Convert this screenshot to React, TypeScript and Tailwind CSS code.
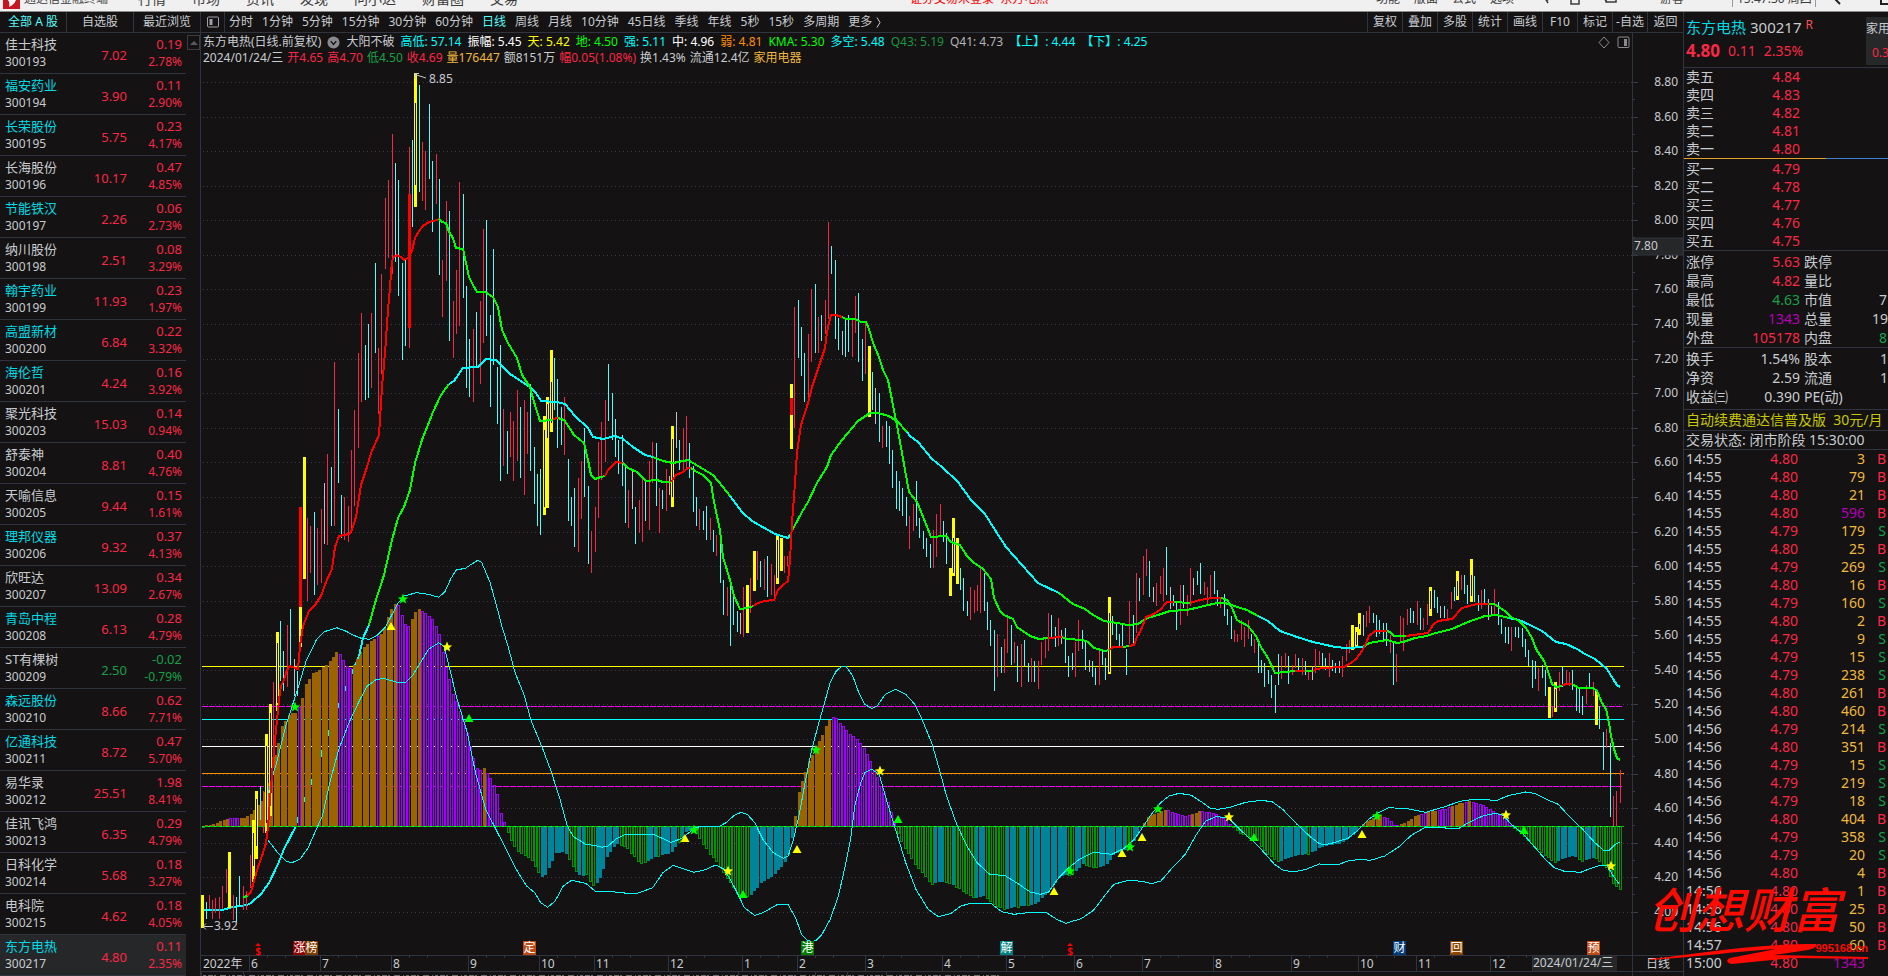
import React from "react";

const SANS = "font-['Noto_Sans','Noto_Sans_CJK_SC',sans-serif]";

/* ---------- watch list ---------- */

type Stock = [name: string, code: string, price: string, change: string, pct: string, hot: boolean];

const STOCKS: Stock[] = [
  ["佳士科技", "300193", "7.02", "0.19", "2.78%", false],
  ["福安药业", "300194", "3.90", "0.11", "2.90%", true],
  ["长荣股份", "300195", "5.75", "0.23", "4.17%", true],
  ["长海股份", "300196", "10.17", "0.47", "4.85%", false],
  ["节能铁汉", "300197", "2.26", "0.06", "2.73%", true],
  ["纳川股份", "300198", "2.51", "0.08", "3.29%", false],
  ["翰宇药业", "300199", "11.93", "0.23", "1.97%", true],
  ["高盟新材", "300200", "6.84", "0.22", "3.32%", true],
  ["海伦哲", "300201", "4.24", "0.16", "3.92%", true],
  ["聚光科技", "300203", "15.03", "0.14", "0.94%", false],
  ["舒泰神", "300204", "8.81", "0.40", "4.76%", false],
  ["天喻信息", "300205", "9.44", "0.15", "1.61%", false],
  ["理邦仪器", "300206", "9.32", "0.37", "4.13%", true],
  ["欣旺达", "300207", "13.09", "0.34", "2.67%", false],
  ["青岛中程", "300208", "6.13", "0.28", "4.79%", true],
  ["ST有棵树", "300209", "2.50", "-0.02", "-0.79%", false],
  ["森远股份", "300210", "8.66", "0.62", "7.71%", true],
  ["亿通科技", "300211", "8.72", "0.47", "5.70%", true],
  ["易华录", "300212", "25.51", "1.98", "8.41%", false],
  ["佳讯飞鸿", "300213", "6.35", "0.29", "4.79%", false],
  ["日科化学", "300214", "5.68", "0.18", "3.27%", false],
  ["电科院", "300215", "4.62", "0.18", "4.05%", false],
  ["东方电热", "300217", "4.80", "0.11", "2.35%", true],
];

/* ---------- trades and order book ---------- */

const TRADES: [string, string, number][] = [
  ["14:55", "4.80", 3], ["14:55", "4.80", 79], ["14:55", "4.80", 21], ["14:55", "4.80", 596],
  ["14:55", "4.79", 179], ["14:55", "4.80", 25], ["14:55", "4.79", 269], ["14:55", "4.80", 16],
  ["14:55", "4.79", 160], ["14:55", "4.80", 2], ["14:55", "4.79", 9], ["14:55", "4.79", 15],
  ["14:56", "4.79", 238], ["14:56", "4.80", 261], ["14:56", "4.80", 460], ["14:56", "4.79", 214],
  ["14:56", "4.80", 351], ["14:56", "4.79", 15], ["14:56", "4.79", 219], ["14:56", "4.79", 18],
  ["14:56", "4.80", 404], ["14:56", "4.79", 358], ["14:56", "4.79", 20], ["14:56", "4.80", 4],
  ["14:56", "4.80", 1], ["14:56", "4.80", 25], ["14:56", "4.80", 50], ["14:57", "4.80", 60],
  ["15:00", "4.80", 1343],
];

const SELLS: [string, string][] = [["卖五", "4.84"], ["卖四", "4.83"], ["卖三", "4.82"], ["卖二", "4.81"], ["卖一", "4.80"]];
const BUYS: [string, string][] = [["买一", "4.79"], ["买二", "4.78"], ["买三", "4.77"], ["买四", "4.76"], ["买五", "4.75"]];

type Stat = [string, string, string, string, string, string];
const STATS_A: Stat[] = [
  ["涨停", "5.63", "text-[#f92845]", "跌停", "", ""],
  ["最高", "4.82", "text-[#f92845]", "量比", "", ""],
  ["最低", "4.63", "text-[#17a047]", "市值", "7", "pl-[7px]"],
  ["现量", "1343", "text-[#b400b4]", "总量", "19", "pl-0"],
  ["外盘", "105178", "text-[#f92845]", "内盘", "8", "pl-[7px] text-[#17a047]"],
];
const STATS_B: Stat[] = [
  ["换手", "1.54%", "", "股本", "14", "pl-2"],
  ["净资", "2.59", "", "流通", "1.", "pl-2"],
  ["收益㈢", "0.390", "", "PE(动)", "", ""],
];

/* ---------- chart series ---------- */

/* Each block holds an origin, the units per pixel on x, and its bars:
   r/c/g thin bars, y/R thick bars, h the hollow part of a thick bar. */
type Block = { ox: number; oy: number; sx: number; bars: string };

const BLOCKS: Block[] = [
  {
    ox: 0, oy: 646, sx: 2.45,
    bars:
      "y497,747,845 c505,768,820 r513,747,790 r521,762,818 r529,756,800 r537,753,819 r545,720,790 r554,669,740 y562,618,787 r571,747,822 c579,753,827 c587,690,780 r597,720,792 r604,735,792 r614,627,725 y621,522,708 h621,560,660 y628,435,640 h628,460,600 c638,420,522 r645,435,560 y653,264,560 h653,300,530 y662,174,510 h662,200,470 r670,108,300 y679,-42,195 h679,-10,170 c687,-75,105 c694,15,135 r704,-63,123 c712,-111,62 g721,38,150 c728,75,150",
  },
  {
    ox: 0, oy: 320, sx: 2.45,
    bars:
      "R737,561,862 y737,862,980 y746,411,777 r753,594,843 r760,618,759 c770,576,825 r778,624,795 r787,567,789 g795,489,672 r802,402,675 c812,441,618 r820,126,618 c829,267,489 c837,525,654 r844,531,660 r854,558,666 r861,390,640 r868,270,558 r879,98,384 r886,-21,245 c895,75,240 c903,12,234 r910,-21,204 c920,-171,99 r927,84,282 r935,-138,162 c1150,57,231 r1160,27,245 c1167,-24,143 r1177,-57,192 r1184,-273,68 c1192,-300,48 c1201,-15,261 c1209,-213,135 c1219,140,312 c1226,75,483",
  },
  {
    ox: 200, oy: 60, sx: 3,
    bars:
      "r556,414,626 r565,360,594 r577,222,642 c586,309,606 c595,360,708 c607,609,900 c616,594,858 r628,261,863 R628,403,805 c637,240,500 y646,40,440 h646,129,375 c658,75,396 r667,246,423 r676,273,450 c688,132,357 c697,303,516 r709,282,432 c718,357,645 r727,600,770 r739,423,662 c748,453,843 r760,723,895 r769,630,822 r778,366,798 c790,402,714 c799,678,984",
  },
  {
    ox: 440, oy: 360, sx: 3,
    bars:
      "r190,147,318 c202,213,342 r211,156,291 r220,183,363 r232,90,303 c241,141,354 r253,120,405 r262,156,282 c271,72,333 c283,261,432 c292,342,498 c301,327,525 y313,168,465 h313,210,440 y322,111,444 h322,132,234 y334,-30,216 h334,66,190 c343,-6,150 c352,57,264 c364,141,255 r373,111,285 c385,297,483 c394,411,498 c403,384,561 r415,354,576 r424,303,477 c433,204,411 c445,378,612 r454,513,639 r466,441,576 r475,246,474 r484,186,360 r496,120,306 c505,12,183 c517,99,240 c526,177,291 c535,240,342 c547,225,378 c556,321,489 r565,390,504 g577,330,447 c586,441,552 r598,420,519 r607,348,546 c616,363,483 r628,303,510 r637,246,369 c649,249,438 r658,384,519 c667,390,447 r679,327,453 g688,348,405 y697,198,441 h697,237,410 g709,156,264 c718,240,330 r730,204,330 r739,168,324 c748,249,354 c760,318,456 c769,411,498 r778,447,510 c790,453,510 c799,438,540 r811,474,540 c820,510,576 r829,525,588 c841,546,669 c850,660,765 r862,681,768 c871,666,858 c880,705,795 c892,753,816 g901,759,822 r910,681,831 y922,675,819 r931,654,759 y943,573,693 r952,573,660 c961,603,681 r973,597,690 c982,588,711 r994,612,705 r1003,645,720 y1012,525,672 h1012,540,655 y1024,534,633 r1033,588,639 r1042,588,618 y1054,72,267 R1054,114,165 r1063,-159,204 c1075,-180,-6 c1084,-99,48 c1093,-21,126 r1106,-78,114",
  },
  {
    ox: 620, oy: 320, sx: 2.45,
    bars:
      "r469,-93,126 c479,-108,99 r486,-9,99 c493,-15,63 r503,-60,42 r511,-294,-3 c518,-222,-138 c528,-180,57 c535,-6,90 g545,33,105 c552,0,111 c560,-15,96 r569,0,111 r577,-72,39 c584,-81,126 c593,57,183 r602,10,162 y611,78,291 c618,156,270 g626,204,312 c635,219,366 r643,318,384 c652,303,381 c660,318,432 c667,390,504 c677,453,567 c685,483,573 c692,504,588 c701,531,618 r709,588,687 r718,552,633 c726,483,618 c734,594,654 c743,633,687 c751,654,711 c760,672,744 r768,630,744 r776,582,711 r785,552,652 c792,603,666 c800,639,732",
  },
  {
    ox: 930, oy: 530, sx: 3,
    bars:
      "y61,114,198 y70,-36,138 h70,25,130 y82,24,162 c91,114,180 c100,144,243 c112,213,258 r121,171,270 r133,180,249 r142,165,243 r151,108,249 c163,129,243 c172,216,300 c181,270,348 c193,300,483 r202,312,441 c214,351,429 r223,327,429 r232,264,369 c244,285,405 r253,336,399 c262,348,456 r274,342,471 c283,330,408 c295,399,456 r304,384,456 c313,393,456 r325,393,477 r334,336,405 r346,327,384 r355,249,363 c364,255,321 c376,291,351 r385,264,348 g394,300,342 c406,294,399 c415,378,441 c427,369,420 r436,336,441 r445,270,363 c457,300,357 c466,330,420 g478,390,426 c487,393,441 c496,414,465 r508,363,465 c517,357,405 c526,384,450 y538,201,432 h538,250,425 c547,258,315 c559,282,330 c568,312,348 c577,285,348 c589,357,435 r598,213,342 c610,255,342 r619,129,310 c628,144,213 r640,78,195 r649,57,138 c658,93,201 g670,171,216 r679,159,228 r691,138,192 r700,114,213 c709,51,195 g721,171,237 c730,195,228 c739,216,300 r751,165,285 c760,165,234 r772,195,258 r781,114,228 g790,144,195 c802,123,165 c811,99,192 r823,156,195 r832,171,222 r841,135,201 c853,123,192 c862,180,228 r871,200,234 c883,192,258 c892,237,285 c904,258,327 r913,300,336 r922,312,336 r934,270,330 r943,291,351 r955,270,327 c964,312,348 r973,327,369 c985,327,429 c994,390,429 c1003,399,471 c1015,420,462 c1024,435,504 c1036,465,548 c1045,372,465 r1054,378,447 r1066,369,414 c1075,378,462 r1087,405,435 r1096,372,414 c1105,384,423 r1117,384,435 c1126,393,435 r1135,423,450 g1147,408,450 r1156,357,429 r1168,363,405 c1177,369,408 c1186,384,420 r1198,369,441 c1207,390,423 c1216,399,429 g1228,393,429 r1237,378,441 r1249,342,393 r1258,330,369 y1267,285,360 y1279,291,351 h1279,305,345 y1288,249,315 h1288,282,296 g1300,255,318 r1309,243,291 r1318,228,279 c1330,249,279 c1339,255,321 c1348,270,312 c1360,279,330 c1369,279,348 r1381,315,369 c1390,339,465 r1399,372,456 r1411,258,336 r1420,264,363 r1432,237,285 c1441,234,279 c1450,243,279 r1462,213,285 c1471,234,300 r1480,264,300 r1492,222,285 y1501,171,258 h1501,183,238 c1513,180,234 c1522,201,249 g1531,228,264 c1543,228,264 r1552,237,267",
  },
  {
    ox: 1248, oy: 320, sx: 2.45,
    bars:
      "r498,816,867 c506,801,843 y513,753,840 h513,783,828 r523,765,810 c530,765,822 c538,795,852 y547,717,846 h547,765,828 c555,768,846 c564,825,873 r572,810,867 c580,807,850 g588,837,900 g597,858,885 r604,807,888 c613,846,915 c621,897,942 c630,921,970 c638,921,972 r646,921,993 c655,921,951 c662,921,955 c672,924,982 c680,957,1011 c688,990,1038",
  },
  {
    ox: 1248, oy: 646, sx: 2.45,
    bars:
      "c697,42,126 c704,45,100 r712,65,135 c721,57,96 c729,72,150 y738,123,216 r746,180,213 y754,108,198 h754,130,186 r762,78,135 c770,60,123 r780,72,115 r787,78,120 c795,72,132 c804,120,195 c812,123,201 c819,150,207 r829,117,174 c837,81,130 r846,108,150 y853,132,237 c861,180,249 c870,258,372 r878,249,306 c888,291,513 r895,450,541 r903,435,541 r912,372,471",
  },
];

const KINDS: [string, string, number][] = [
  ["r", "#ee2a48", 1],
  ["c", "#54fcfc", 1],
  ["g", "#c0c0c8", 1],
  ["y", "#ffff00", 3],
  ["R", "#ff0000", 3],
  ["h", "#141213", 1],
];

function barPath(kind: string): string {
  let d = "";
  for (const b of BLOCKS) {
    for (const item of b.bars.split(" ")) {
      if (item[0] !== kind) continue;
      const [x, t, e] = item.slice(1).split(",").map(Number);
      d += `M${Math.floor(b.ox + x / b.sx) + 0.5} ${Math.round(b.oy + t / 3)}V${Math.round(b.oy + e / 3)}`;
    }
  }
  return d;
}

const C = "#00ffff";
const G = "#00ff00";
const R = "#ff0000";

const FAST: [string, string][] = [
  [G, "243,897 248,896"],
  [R, "247,896 251,892 254,881 258,867 263,853 266,843 268,827 270,800 273,762 276,730 279,700 281,686 284,680 287,670 290,666 295,668 298,669 300,646 303,626 309,611 315,605 321,596 326,582 332,569 335,547 339,536 349,534 352,530 356,517 361,485 367,467 371,453 379,435 382,387 385,353 388,310 390,287 392,261 394,257 397,255 401,257 404,260 408,258 412,251 415,238 419,231 423,226 429,222 437,220 439,219"],
  [G, "439,219 442,222 446,223 449,232 453,238 456,248 463,249 466,263 469,277 473,285 477,292 485,292 493,297 498,307 502,330 508,343 517,358 522,375 530,387 534,402 540,421 553,420"],
  [R, "553,419 558,418"],
  [G, "558,418 564,420 569,427 574,435 584,443 588,460 591,475 595,479 601,477 605,476"],
  [R, "605,476 608,470 616,462 623,463"],
  [G, "623,463 628,468 637,472 642,477 646,481 657,480 663,482 671,482"],
  [R, "671,482 676,475 683,472 688,468 691,468"],
  [G, "691,468 695,471 703,475 711,483 714,502 720,530 723,557 730,580 734,596 740,609 748,608 753,606"],
  [R, "753,606 758,603 765,601 774,600 778,590 783,585 788,581 790,560 792,523 795,483 797,452 801,425 808,403 812,387 821,360 825,348 827,332 829,323 831,315 836,315 842,317"],
  [G, "842,317 846,319 855,319 861,322 866,322 869,329 873,343 879,357 883,370 888,380 892,400 896,420 902,453 909,492 917,502 924,519 931,537 946,536 951,542 960,545 967,556 973,562 983,569 991,579 994,598 1000,611 1004,615 1013,619 1017,627 1030,636 1039,639 1048,638"],
  [R, "1048,638 1062,637"],
  [G, "1062,637 1067,639 1083,640 1088,642 1094,648 1105,651 1109,650"],
  [R, "1109,650 1113,647 1123,647"],
  [G, "1123,647 1129,646"],
  [R, "1129,646 1134,645 1137,637 1141,630 1146,617 1152,615 1160,610 1167,602 1174,602"],
  [G, "1174,602 1190,603"],
  [R, "1190,603 1200,600 1212,598 1221,598"],
  [G, "1221,598 1225,599 1228,601 1232,608 1237,620 1248,626 1256,636 1261,647 1268,658 1275,673 1285,672 1295,671"],
  [R, "1295,671 1305,671"],
  [G, "1305,671 1313,671"],
  [R, "1313,671 1317,669 1323,668 1344,667 1351,663 1356,659 1362,651 1366,643 1369,636 1375,631 1387,631"],
  [G, "1387,631 1390,632 1394,636 1406,636"],
  [R, "1406,636 1413,635 1428,633 1433,625 1438,621 1452,619 1462,608 1477,604 1489,604"],
  [G, "1489,604 1494,604 1499,607 1506,612 1511,617 1519,621 1526,628 1532,638 1536,649 1540,655 1544,661 1548,671 1552,684 1556,687 1562,686"],
  [R, "1562,685 1567,684 1572,684"],
  [G, "1572,684 1579,688 1593,688 1597,691 1602,703 1606,709 1609,723 1611,736 1614,749 1617,758 1620,760"],
];

const SLOW_START = "202,910 222,910 233,907 247,905 251,903 261,894 269,883 278,864 284,849 295,828 302,806 313,778 337,709 359,656 363,638 369,625";

const SLOW: [string, string][] = [
  [C, "359,656 363,638 369,625"],
  [G, "369,625 375,603 384,575 392,540 398,518 404,507 410,490 415,463 422,440 433,412 441,395 449,384"],
  [C, "449,384 454,381 463,368 478,367 486,359 496,360 510,374 530,387 536,393 541,401 557,402 565,404 575,416 588,428 593,437 603,439 615,436 623,439 633,447 645,455 653,457"],
  [G, "653,457 663,461 673,463 688,460 698,466 713,475 723,487 730,496"],
  [C, "730,496 742,512 752,521 775,534 788,538 790,535"],
  [G, "790,535 794,527 802,512 808,502 817,483 827,467 831,455 842,440 858,421 870,413 878,413 889,416 898,422 907,432"],
  [C, "907,432 910,436 918,442 932,459 942,467 958,482 971,500 985,514 995,530 1006,547 1022,565 1038,583 1059,593"],
  [G, "1059,593 1073,604 1085,609 1093,615 1104,621 1117,623 1128,625 1138,624 1147,618 1158,615 1170,611 1187,610 1200,607 1217,603 1225,603 1247,610 1258,616"],
  [C, "1258,616 1268,621 1280,631 1297,637 1313,642 1335,647 1347,648 1363,647"],
  [G, "1363,647 1369,643 1387,640 1397,643 1403,642 1415,638 1427,636 1432,634 1448,630 1452,629 1468,622 1485,616 1497,615 1509,618"],
  [C, "1509,618 1519,620 1530,625 1542,631 1556,642 1566,644 1577,649 1585,654 1595,659 1607,669 1613,679 1617,685 1620,687"],
];

/* Band samples: origin x, origin y, then points in 2.45 × 3 units. */
type Span = [number, number, string];

const UPPER: Span[] = [
  [0, 646, "657,440 670,380 678,350 700,240 728,135 750,45 762,15"],
  [0, 320, "775,960 795,935 825,923 845,932 865,945 885,955 905,958 925,945 945,920 960,885 975,850 990,828 1020,818 1050,823 1075,832 1090,815 1105,775 1118,750 1140,745 1155,733 1170,721 1180,727 1200,785 1215,850 1230,920 1245,980"],
  [0, 646, "1250,25 1262,80 1285,150 1300,220 1330,310 1350,375 1372,460 1390,540 1405,572 1435,595 1460,599 1475,604 1490,600 1510,578 1530,566"],
  [620, 646, "20,566 85,566 100,575 125,589 150,578 185,545 200,541 240,543 260,530 280,508 297,499 312,505 330,530 350,580 375,620 400,637 412,630 425,580 440,500 455,400 470,310 485,240 500,175 515,110 530,75 542,62 555,63 570,90 585,140 600,175 617,188 630,180 650,145 675,130 700,145 722,175 740,220 765,295 780,360 800,450 825,535 850,600 875,650 905,684 945,690 975,713 1005,738 1030,745 1050,738 1075,695 1100,665 1125,640 1160,619 1205,625 1235,607 1260,580 1280,545 1300,508 1325,470 1345,450 1370,442 1400,448 1430,472 1445,486 1465,490 1495,484 1530,470"],
  [1248, 646, "0,468 35,463 60,468 85,490 120,535 155,575 175,593 190,596 210,590 245,577 270,552 295,520 320,500 345,485 390,488 435,499 480,483 520,466 555,460 610,463 640,448 680,438 705,443 735,462 760,475 790,515 820,550 850,590 870,612 885,613 900,595 912,588"],
];

const LOWER: Span[] = [
  [0, 646, "657,583 680,620 700,645 715,650 735,640 755,605 775,550 790,510 810,400 830,310 855,230 880,165 900,120 920,102 940,97 970,108 995,108 1010,90 1030,50 1050,10 1075,-10 1088,2 1100,60 1120,160 1145,260 1165,380 1190,490 1215,550 1240,610 1265,670 1290,720 1310,740 1325,770 1342,784 1360,765 1380,720 1400,703 1435,712 1460,737 1500,737 1530,741"],
  [620, 646, "45,741 80,725 105,680 130,658 155,668 180,679 205,673 235,657 255,670 270,700 285,735 305,785 330,808 350,800 385,776 412,776 430,815 445,865 458,882 470,887 482,882 495,865 515,820 535,750 550,670 565,580 575,480 590,410 600,380 617,370 635,385 655,470 675,550 700,650 725,730 755,790 780,812 810,803 835,780 860,772 910,773 935,797 965,805 1000,800 1045,800 1070,820 1092,832 1130,818 1160,793 1190,745 1210,715 1245,703 1280,706 1302,713 1325,705 1350,670 1385,625 1410,570 1435,525 1460,512 1490,515 1510,540 1536,570"],
  [1248, 646, "15,588 40,620 65,655 85,672 110,678 140,671 175,654 220,656 245,645 275,640 300,643 335,630 370,602 400,568 435,543 470,545 515,548 540,530 575,510 605,502 625,508 645,535 675,565 700,600 725,635 750,665 775,676 815,679 840,667 865,657 880,660 895,690 910,715"],
];

function bandPoints(spans: Span[]): string {
  return spans
    .flatMap(([ox, oy, pts]) =>
      pts.split(" ").map((p) => {
        const [x, y] = p.split(",").map(Number);
        return `${(ox + x / 2.45).toFixed(1)},${(oy + y / 3).toFixed(1)}`;
      }),
    )
    .join(" ");
}

/* Histogram: height profile and the ranges that take the second colour. */
const ZERO = 826;
const PROFILE =
  "203,826 214,824 220,821 230,818 243,818 250,815 260,803 267,787 277,747 282,726 290,713 297,713 302,698 306,684 312,674 320,669 329,663 338,649 342,658 347,666 351,668 355,664 361,650 366,645 375,638 382,633 388,617 393,603 398,605 402,615 406,627 410,624 415,612 419,609 423,612 431,617 437,628 441,640 445,663 453,694 461,713 467,733 473,758 478,771 484,768 490,778 496,789 500,809 503,820 506,826 512,843 520,853 531,858 541,878 547,873 555,853 565,852 571,863 580,877 586,874 594,887 599,881 608,854 618,843 626,847 640,863 646,862 659,855 671,853 685,833 693,828 702,843 718,864 728,879 738,894 749,897 761,883 775,874 787,859 792,838 793,826 795,816 798,796 802,781 808,763 816,746 822,735 827,724 831,716 836,718 849,733 857,739 865,749 872,766 881,786 887,799 893,819 895,826 902,843 914,863 932,884 944,881 955,886 975,898 985,896 993,904 1004,909 1016,907 1036,904 1046,894 1061,876 1073,874 1083,864 1098,868 1106,865 1114,854 1130,848 1142,826 1149,816 1167,809 1177,814 1187,816 1200,811 1212,812 1224,818 1232,826 1240,833 1256,839 1266,853 1279,862 1293,856 1311,853 1321,847 1342,843 1354,834 1361,826 1366,822 1379,815 1389,819 1395,826 1405,823 1415,816 1432,811 1444,809 1460,803 1471,801 1483,805 1493,811 1503,816 1511,826 1521,833 1534,846 1554,862 1572,856 1583,861 1595,857 1607,868 1613,883 1620,889"
    .split(" ")
    .map((p) => p.split(",").map(Number));

const FALLING: [number, number][] = [
  [230, 239], [296, 300], [340, 353], [377, 380], [396, 408], [421, 482], [485, 506], [833, 896], [1168, 1189], [1202, 1209],
  [1213, 1233], [1381, 1397], [1421, 1426], [1437, 1449], [1463, 1467], [1473, 1512],
];
const RISING: [number, number][] = [
  [542, 567], [579, 585], [597, 618], [648, 656], [659, 676], [681, 692], [749, 794], [934, 944], [951, 953], [975, 986], [1006, 1014],
  [1019, 1027], [1030, 1066], [1076, 1085], [1098, 1125], [1131, 1143], [1279, 1306], [1310, 1361], [1558, 1576], [1585, 1594],
];

const within = (x: number, list: [number, number][]) => list.some(([a, b]) => x >= a && x <= b);

function levelAt(x: number): number {
  for (let i = 1; i < PROFILE.length; i++) {
    const [x1, y1] = PROFILE[i];
    const [x0, y0] = PROFILE[i - 1];
    if (x <= x1) return y0 + ((y1 - y0) * (x - x0)) / (x1 - x0);
  }
  return PROFILE[PROFILE.length - 1][1];
}

const HISTOGRAM = Array.from({ length: 415 }, (_, i) => {
  const x = Math.round(203 + i * 3.4225);
  const y = Math.round(levelAt(x));
  return { x, y, up: y < ZERO };
});

const RAILS: [number, string, boolean][] = [
  [666, "#ffff00", false],
  [706, "#ff00ff", true],
  [719, "#00ffff", false],
  [746, "#ffffff", false],
  [773, "#ff9000", false],
  [786, "#ff00ff", true],
];

const STARS: [number, number, string][] = [
  [295, 707, G], [403, 599, G], [447, 647, "#ffff00"], [694, 830, G], [728, 871, "#ffff00"], [816, 750, G], [880, 771, "#ffff00"],
  [1070, 871, G], [1130, 847, G], [1158, 809, G], [1229, 817, "#ffff00"], [1377, 816, G], [1506, 815, "#ffff00"], [1611, 866, "#ffff00"],
];
const TRIANGLES: [number, number, string][] = [
  [391, 626, "#ffff00"], [469, 718, G], [685, 838, "#ffff00"], [743, 894, G], [797, 849, "#ffff00"], [898, 819, G], [1054, 891, "#ffff00"],
  [1122, 853, "#ffff00"], [1142, 837, "#ffff00"], [1254, 837, G], [1362, 834, "#ffff00"], [1524, 830, G],
];
const BADGES: [number, string, string][] = [
  [293, "涨", "#8b0000"], [305, "榜", "#7d3c00"], [523, "定", "#c04a14"], [801, "港", "#007d00"],
  [1000, "解", "#007f80"], [1393, "财", "#003c78"], [1450, "回", "#8a4600"], [1587, "预", "#c04a14"],
];
const MONTHS: [number, string][] = [
  [249, "6"], [320, "7"], [391, "8"], [468, "9"], [539, "10"], [594, "11"], [668, "12"], [742, "1"], [797, "2"], [865, "3"], [942, "4"],
  [1006, "5"], [1074, "6"], [1142, "7"], [1213, "8"], [1291, "9"], [1358, "10"], [1416, "11"], [1490, "12"], [1532, ""],
];

function Chart() {
  const levels = Array.from({ length: 25 }, (_, i) => ({ y: Math.round(82 + i * 34.58), label: (8.8 - i * 0.2).toFixed(2) }));
  return (
    <svg
      viewBox="201 33 1482 943"
      className={`block h-full w-full ${SANS} text-xs`}
      preserveAspectRatio="xMinYMin meet"
      role="img"
      aria-label="日线"
    >
      <g shapeRendering="crispEdges" fill="none">
        {levels.map(({ y }) => (
          <g key={y} stroke="#3a3d48">
            <path d={`M203 ${y}.5H1632`} strokeDasharray="1 3" />
            <path d={`M1633 ${y}.5h5`} />
            {y < 900 && <path d={`M1633 ${y + 17}.5h2`} />}
          </g>
        ))}
        <path d="M1632.5 33V976M201 955.5H1683M201 971.5H1683" stroke="#30343f" />
        {RAILS.map(([y, color, dashed]) => (
          <path key={y} d={`M202 ${y}.5H${dashed ? 1622 : 1624}`} stroke={color} strokeDasharray={dashed ? "6 1" : undefined} />
        ))}
        <polyline points={SLOW_START} stroke={C} strokeWidth="2" />
        {HISTOGRAM.map(({ x, y, up }) => {
          const top = Math.min(y, ZERO);
          const h = Math.max(1, Math.abs(y - ZERO));
          if (up && !within(x, FALLING)) return <rect key={x} x={x - 1} y={top} width="3" height={h} fill="#9c6400" />;
          if (!up && within(x, RISING)) return <rect key={x} x={x - 1} y={top} width="3" height={h} fill="#008499" />;
          return <rect key={x} x={x - 0.5} y={top + 0.5} width="2" height={h} fill="#141213" stroke={up ? "#a000ff" : "#009600"} />;
        })}
        <path d="M202 826.5H1624" stroke="#00c800" />
        <path d="M202 826.5H1624" stroke="#00ff40" strokeDasharray="2 4" />
        {KINDS.map(([k, color, w]) => (
          <path key={k} d={barPath(k)} stroke={color} strokeWidth={w} />
        ))}
        <polyline points={bandPoints(UPPER)} stroke={C} />
        <polyline points={bandPoints(LOWER)} stroke={C} />
        {SLOW.map(([color, pts]) => (
          <polyline key={pts} points={pts} stroke={color} strokeWidth="2" />
        ))}
        {FAST.map(([color, pts]) => (
          <polyline key={pts} points={pts} stroke={color} strokeWidth="2" />
        ))}
      </g>

      {STARS.map(([x, y, color]) => (
        <path key={`${x}-${y}`} transform={`translate(${x} ${y})`} d="M0-5.5 1.5-1.7 5-1.5 2.2.9 3.2 4.6 0 2.6-3.2 4.6-2.2.9-5-1.5-1.5-1.7Z" fill={color} />
      ))}
      {TRIANGLES.map(([x, y, color]) => (
        <path key={`${x}-${y}`} transform={`translate(${x} ${y})`} d="M0-4 4.5 4h-9Z" fill={color} />
      ))}

      <g stroke="#c8c8d0" fill="none">
        <path d="M426 78 415 74.500M415 78.500V73.500H419" />
        <path d="M213 926.500H203M206 923.500 203 926.500 206 929.500" />
      </g>
      <g fill="#c8c8d0">
        <text x="429" y="83">8.85</text>
        <text x="214" y="930">3.92</text>
      </g>

      {[258, 1070].map((x) => (
        <g key={x} fill="#ff0000">
          <path d={`M${x - 3} 946 ${x} 943 ${x + 3} 946Z`} />
          <text x={x} y="955" textAnchor="middle" fontSize="10" fontWeight="700">
            $
          </text>
        </g>
      ))}
      {BADGES.map(([x, label, color]) => (
        <g key={x}>
          <rect x={x} y="941" width="13" height="14" fill={color} />
          <text x={x + 6.5} y="952" textAnchor="middle" fontSize="12" fill="#ffffff">
            {label}
          </text>
        </g>
      ))}

      <g fill="#c8ccd0">
        {levels.map(({ y, label }) => (
          <text key={label} x="1678" y={y + 4} textAnchor="end">
            {label}
          </text>
        ))}
        <text x="203" y="968">2022年</text>
        {MONTHS.map(([x, label]) => (
          <g key={x}>
            <path d={`M${x}.5 955V971`} stroke="#30343f" />
            <path d={`M${x + 18}.5 955V958M${x + 36}.5 955V958`} stroke="#30343f" />
            <text x={x + 2} y="968">
              {label}
            </text>
          </g>
        ))}
        <rect x="1633" y="238" width="50" height="17" fill="#262728" stroke="#30343f" />
        <text x="1634" y="250">7.80</text>
        <rect x="1533" y="956" width="84" height="15" fill="#262728" />
        <text x="1533" y="967">2024/01/24/三</text>
        <text x="1646" y="968">日线</text>
      </g>
      <path d="M203 975.500H1000" stroke="#6c6f74" strokeDasharray="3 2 5 1 2 4 6 3 1 2" />
      <path d="M201.500 972v4M243.500 972v4M670.500 972v4M738.500 972v4M815.500 972v4M847.500 972v4M886.500 972v4" stroke="#30343f" />
    </svg>
  );
}

/* ---------- page parts ---------- */

function TitleBar() {
  return (
    <header className="relative h-3 shrink-0 overflow-hidden border-b border-[#8a8a8a] bg-[#f0f0f0] text-xs text-[#3c3c3c]">
      <div className="absolute inset-x-0 bottom-[2px] flex h-5 items-center">
        <div className="flex w-[138px] items-center gap-1 pl-[3px]">
          <svg viewBox="0 0 17 20" className="h-5 w-[17px]" aria-hidden="true">
            <rect width="17" height="20" fill="#c8141e" />
            <path d="M3 10c3 1 4 4 3 8 5-2 8-6 8-14-3 3-6 5-11 6Z" fill="#fff" />
          </svg>
          <span className="whitespace-nowrap">通达信金融终端</span>
        </div>
        <nav className="flex gap-[26px] text-sm">
          {["行情", "市场", "资讯", "发现", "问小达", "财富圈", "交易"].map((m) => (
            <a key={m} href="#" className="whitespace-nowrap">
              {m}
            </a>
          ))}
        </nav>
        <p className="ml-[392px] whitespace-nowrap text-[#ff0000]">证券交易未登录&nbsp; 东方电热</p>
        <nav className="ml-auto flex items-center gap-[14px]">
          {["功能", "版面", "公式", "选项"].map((m) => (
            <a key={m} href="#" className="whitespace-nowrap">
              {m}
            </a>
          ))}
        </nav>
        <svg viewBox="0 0 90 20" className="ml-6 h-5 w-[90px]" fill="none" stroke="#3c3c3c" strokeWidth="1.500" aria-hidden="true">
          <path d="M8 3c5-1 7 4 3 7l-3 2M5 6l5 8M33 4h8v11h-8zM33 10h8M68 4h10v9H68zM65 8l4 5" />
        </svg>
        <a href="#" className="ml-8 whitespace-nowrap">
          游客
        </a>
        <time className="ml-12 w-[84px] whitespace-nowrap border-x border-[#9a9a9a] pl-1">15:47:30 周四</time>
        <svg viewBox="0 0 72 20" className="h-5 w-[72px]" fill="none" stroke="#222" strokeWidth="2" aria-hidden="true">
          <path d="M24 6 19 10 24 15M65 4v11h9M65 9h9" />
        </svg>
      </div>
    </header>
  );
}

function WatchList() {
  return (
    <aside className="flex w-[201px] shrink-0 flex-col border-r border-[#30343f]">
      <div className="flex h-[21px] shrink-0 border-b border-[#30343f] text-xs">
        {["全部 A 股", "自选股", "最近浏览"].map((t, i) => (
          <button
            key={t}
            type="button"
            className={`flex-1 whitespace-nowrap leading-5 ${i === 0 ? "text-[#54fcfc]" : "border-l border-[#30343f] text-[#c8ccd0]"}`}
          >
            {t}
          </button>
        ))}
      </div>
      <div className="flex">
        <table className="w-[186px] table-fixed border-separate border-spacing-0">
          <colgroup>
            <col className="w-[70px]" />
            <col className="w-[57px]" />
            <col />
          </colgroup>
          <tbody>
            {STOCKS.map(([name, code, price, change, pct, hot], i) => {
              const tone = change.startsWith("-") ? "text-[#17a047]" : "text-[#f92845]";
              const cell = `h-[41px] border-b border-[#30343f] p-0 ${i === STOCKS.length - 1 ? "bg-[#262728]" : ""}`;
              return (
                <tr key={code}>
                  <td className={`${cell} pl-[5px]`}>
                    <div className={`whitespace-nowrap text-[13px] leading-[17px] ${hot ? "text-[#00dce6]" : "text-[#c8ccd0]"}`}>{name}</div>
                    <div className="text-xs leading-[17px] text-[#c8ccd0]">{code}</div>
                  </td>
                  <td className={`${cell} pt-1 text-right text-[13px] leading-[17px] ${tone}`}>{price}</td>
                  <td className={`${cell} pr-1 text-right ${tone}`}>
                    <div className="text-[13px] leading-[18px]">{change}</div>
                    <div className="text-xs leading-[18px]">{pct}</div>
                  </td>
                </tr>
              );
            })}
          </tbody>
        </table>
        <button type="button" aria-label="上移" className="mt-[2px] ml-px flex h-[15px] w-[13px] items-center justify-center border border-[#3c3c3e]">
          <svg viewBox="0 0 8 4" className="h-1 w-2" aria-hidden="true">
            <path d="M0 4 4 0 8 4Z" fill="#5a5a5e" />
          </svg>
        </button>
      </div>
    </aside>
  );
}

const PERIODS = ["分时", "1分钟", "5分钟", "15分钟", "30分钟", "60分钟", "日线", "周线", "月线", "10分钟", "45日线", "季线", "年线", "5秒", "15秒", "多周期"];
const TOOLS = ["复权", "叠加", "多股", "统计", "画线", "F10", "标记", "-自选", "返回"];

function Toolbar() {
  return (
    <div className="flex h-[21px] shrink-0 border-b border-[#30343f] text-xs leading-5 text-[#c8ccd0]">
      <button type="button" aria-label="侧栏" className="flex w-6 items-center justify-center border-r border-[#30343f]">
        <svg viewBox="0 0 12 12" className="size-3" aria-hidden="true">
          <rect x=".5" y="1" width="11" height="10" rx="1" fill="none" stroke="#a0a0a4" />
          <rect x="2.500" y="3" width="3" height="6" fill="#a0a0a4" />
        </svg>
      </button>
      <div className="flex gap-[9px] pl-1">
        {PERIODS.map((p) => (
          <button key={p} type="button" className={`whitespace-nowrap ${p === "日线" ? "text-[#54fcfc]" : ""}`}>
            {p}
          </button>
        ))}
        <button type="button" className="flex items-center gap-1 whitespace-nowrap">
          更多
          <svg viewBox="0 0 5 11" className="h-[11px] w-[5px]" fill="none" stroke="#c8ccd0" aria-hidden="true">
            <path d="M1 .5 4 5.500 1 10.500" />
          </svg>
        </button>
      </div>
      <div className="ml-auto flex">
        {TOOLS.map((t) => (
          <button key={t} type="button" className="w-[35px] whitespace-nowrap border-l border-[#30343f] last:w-[36px]">
            {t}
          </button>
        ))}
      </div>
    </div>
  );
}

const READINGS: [string, string][] = [
  ["高低: 57.14", "text-[#00ffff]"],
  ["振幅: 5.45", "text-white"],
  ["天: 5.42", "text-[#ffff00]"],
  ["地: 4.50", "text-[#00ff00]"],
  ["强: 5.11", "text-[#00ffff]"],
  ["中: 4.96", "text-white"],
  ["弱: 4.81", "text-[#ff9000]"],
  ["KMA: 5.30", "text-[#00ff00]"],
  ["多空: 5.48", "text-[#00ffff]"],
  ["Q43: 5.19", "text-[#1d9440]"],
  ["Q41: 4.73", "text-[#b4b4b8]"],
  ["【上】: 4.44", "text-[#00ffff]"],
  ["【下】: 4.25", "text-[#00ffff]"],
];

const QUOTE: [string, string][] = [
  ["2024/01/24/三", "text-[#c8ccd0]"],
  ["开4.65", "text-[#f92845]"],
  ["高4.70", "text-[#f92845]"],
  ["低4.50", "text-[#17a047]"],
  ["收4.69", "text-[#f92845]"],
  ["量176447", "text-[#f0b93c]"],
  ["额8151万", "text-[#c8ccd0]"],
  ["幅0.05(1.08%)", "text-[#f92845]"],
  ["换1.43%", "text-[#c8ccd0]"],
  ["流通12.4亿", "text-[#c8ccd0]"],
  ["家用电器", "text-[#f0b93c]"],
];

function ChartPane() {
  return (
    <main className="flex min-w-0 flex-1 flex-col">
      <Toolbar />
      <div className="relative min-h-0 flex-1">
        <Chart />
        <div className="absolute inset-x-0 top-0 flex flex-col pl-[2px] text-xs leading-4">
          <div className="flex items-center gap-[6px] whitespace-nowrap pt-px">
            <span className="text-[#c8ccd0]">东方电热(日线.前复权)</span>
            <button type="button" aria-label="展开" className="flex">
              <svg viewBox="0 0 14 14" className="size-[13px]" aria-hidden="true">
                <circle cx="7" cy="7" r="6.500" fill="#8a8a8e" />
                <path d="M4 5.500 7 9 10 5.500" fill="none" stroke="#141213" strokeWidth="1.500" />
              </svg>
            </button>
            <span className="text-[#c8ccd0]">大阳不破</span>
            {READINGS.map(([t, tone]) => (
              <span key={t} className={tone}>
                {t}
              </span>
            ))}
            <svg viewBox="0 0 34 14" className="mr-[52px] ml-auto h-[14px] w-[34px]" fill="none" stroke="#8a8a8e" aria-hidden="true">
              <path d="M7 2 12 7.500 7 13 2 7.500Z" />
              <rect x="21" y="2" width="11" height="10.500" rx="1" />
              <rect x="27" y="4" width="3" height="7" fill="#8a8a8e" stroke="none" />
            </svg>
          </div>
          <div className="flex gap-1 whitespace-nowrap">
            {QUOTE.map(([t, tone]) => (
              <span key={t} className={tone}>
                {t}
              </span>
            ))}
          </div>
        </div>
      </div>
    </main>
  );
}

function Book({ rows }: { rows: [string, string][] }) {
  return (
    <table className="w-[116px] border-collapse">
      <tbody>
        {rows.map(([label, price]) => (
          <tr key={label} className="h-[18px]">
            <td className="p-0 pl-[2px] leading-[18px]">{label}</td>
            <td className="p-0 text-right leading-[18px] text-[#f92845]">{price}</td>
          </tr>
        ))}
      </tbody>
    </table>
  );
}

function Stats({ rows }: { rows: Stat[] }) {
  return (
    <table className="w-full table-fixed border-collapse whitespace-nowrap">
      <colgroup>
        <col className="w-[52px]" />
        <col className="w-16" />
        <col className="w-[72px]" />
        <col />
      </colgroup>
      <tbody>
        {rows.map(([a, av, tone, b, bv, bTone]) => (
          <tr key={a} className="h-[19px]">
            <td className="p-0 pl-[2px] leading-[19px]">{a}</td>
            <td className={`p-0 text-right leading-[19px] ${tone}`}>{av}</td>
            <td className="p-0 pl-1 leading-[19px]">{b}</td>
            <td className={`p-0 leading-[19px] ${bTone}`}>{bv}</td>
          </tr>
        ))}
      </tbody>
    </table>
  );
}

function QuotePanel() {
  return (
    <aside className="w-[205px] shrink-0 overflow-hidden border-l border-[#30343f] text-sm text-[#c8ccd0]">
      <div className="flex h-14 border-b border-[#30343f]">
        <div className="flex flex-1 flex-col pt-[3px] pl-[2px] whitespace-nowrap">
          <h1 className="flex gap-1 text-[15px] leading-6">
            <span className="text-[#00dce6]">东方电热</span>
            <span>300217</span>
            <sup className="top-0 text-xs leading-5 text-[#f95050]">R</sup>
          </h1>
          <p className="flex items-center gap-2 leading-6 text-[#f92845]">
            <b className="text-[17px]">4.80</b>
            <span>0.11</span>
            <span>2.35%</span>
          </p>
        </div>
        <div className="mt-[5px] flex h-12 w-[22px] flex-col overflow-hidden bg-[#262829] text-xs leading-6 whitespace-nowrap">
          <span>家用</span>
          <span className="pl-[6px] text-[#f92845]">0.3</span>
        </div>
      </div>
      <Book rows={SELLS} />
      <div className="mb-px flex h-px">
        <span className="w-[142px] bg-[#e6a028]" />
        <span className="flex-1 bg-[#3c82d2]" />
      </div>
      <Book rows={BUYS} />
      <div className="border-y border-[#30343f] pt-px">
        <Stats rows={STATS_A} />
      </div>
      <div className="border-b border-[#30343f] pt-px pb-[3px]">
        <Stats rows={STATS_B} />
      </div>
      <p className="h-[21px] border-b border-[#30343f] pl-[2px] leading-5 whitespace-nowrap text-[#c8c800]">自动续费通达信普及版&nbsp; 30元/月</p>
      <p className="h-[19px] border-b border-[#30343f] pl-[2px] leading-[18px] whitespace-nowrap">交易状态: 闭市阶段 15:30:00</p>
      <table className="w-full table-fixed border-collapse">
        <colgroup>
          <col className="w-[52px]" />
          <col className="w-[62px]" />
          <col className="w-[67px]" />
          <col />
        </colgroup>
        <tbody>
          {TRADES.map(([time, price, volume], i) => {
            const buy = price === "4.80";
            return (
              <tr key={i} className="h-[18px]">
                <td className="p-0 pl-[2px] leading-[18px]">{time}</td>
                <td className="p-0 text-right leading-[18px] text-[#f92845]">{price}</td>
                <td className={`p-0 text-right leading-[18px] ${volume > 500 ? "text-[#b400b4]" : "text-[#f0b93c]"}`}>{volume}</td>
                <td className={`p-0 pr-[2px] text-right leading-[18px] ${buy ? "text-[#f92845]" : "text-[#17a047]"}`}>
                  {time === "15:00" ? "" : buy ? "B" : "S"}
                </td>
              </tr>
            );
          })}
        </tbody>
      </table>
    </aside>
  );
}

function Watermark() {
  return (
    <div className="pointer-events-none absolute right-5 bottom-4 h-[76px] w-[220px] text-[#ff0a00]">
      <svg viewBox="0 0 220 84" className="absolute top-0 left-0 h-[84px] w-full" aria-hidden="true">
        <path d="M2 75C50 70 100 60 168 60 169 63 166 65 160 66L126 71 220 73V75L145 74 84 80C78 79 78 76 82 74L128 65C90 67 50 73 2 76Z" fill="#ff0a00" />
      </svg>
      <p className="absolute top-[-2px] left-0 text-5xl leading-[56px] font-medium whitespace-nowrap italic">创想财富</p>
      <p className="absolute right-0 bottom-[6px] font-['Liberation_Sans',sans-serif] text-[11px] leading-3 font-bold">995168.cn</p>
    </div>
  );
}

export default function App() {
  return (
    <div className={`relative flex h-screen flex-col overflow-hidden bg-[#141213] ${SANS}`}>
      <TitleBar />
      <div className="flex min-h-0 flex-1">
        <WatchList />
        <ChartPane />
        <QuotePanel />
      </div>
      <Watermark />
    </div>
  );
}
